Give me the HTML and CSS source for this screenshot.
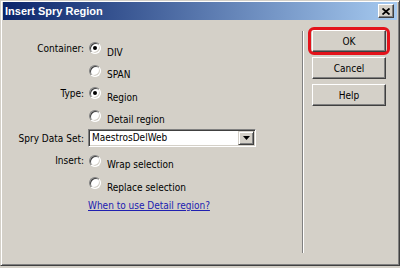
FILE: index.html
```html
<!DOCTYPE html>
<html lang="en">
<head>
  <meta charset="UTF-8" />
  <title>Insert Spry Region</title>
  <link rel="stylesheet" href="styles.css">
</head>
<body>

  <div class="window">

    <!-- Title bar -->
    <div class="titlebar">
      <span>Insert Spry Region</span>
      <button class="close" type="button">
        <svg width="8" height="7" viewBox="0 0 8 7">
          <path d="M0.5 0.5 L7.5 6.5 M7.5 0.5 L0.5 6.5" stroke="#000" stroke-width="1.8" fill="none"/>
        </svg>
      </button>
    </div>

    <div class="main">

      <!-- Form fields -->
      <form class="fields">
        <span class="label">Container:</span>
        <label class="value"><span class="radio on"></span><span class="option">DIV</span></label>

        <span class="label"></span>
        <label class="value"><span class="radio"></span><span class="option">SPAN</span></label>

        <span class="label">Type:</span>
        <label class="value"><span class="radio on"></span><span class="option">Region</span></label>

        <span class="label"></span>
        <label class="value"><span class="radio"></span><span class="option">Detail region</span></label>

        <span class="label">Spry Data Set:</span>
        <div class="value">
          <div class="select">
            <span class="select-text">MaestrosDelWeb</span>
            <span class="drop">
              <svg width="7" height="4" viewBox="0 0 7 4"><path d="M0 0 H7 L3.5 4 Z" fill="#000"/></svg>
            </span>
          </div>
        </div>

        <span class="label">Insert:</span>
        <label class="value"><span class="radio"></span><span class="option">Wrap selection</span></label>

        <span class="label"></span>
        <label class="value"><span class="radio"></span><span class="option">Replace selection</span></label>

        <span class="label"></span>
        <div class="value"><a class="link" href="#">When to use Detail region?</a></div>
      </form>

      <div class="separator"></div>

      <!-- Buttons -->
      <div class="actions">
        <button class="btn default" type="button">OK</button>
        <button class="btn" type="button">Cancel</button>
        <button class="btn" type="button">Help</button>
      </div>

    </div>
  </div>

</body>
</html>
```

FILE: styles.css
```css
* {
  box-sizing: border-box;
}
body {
  margin: 0;
  background: #d4d0c8;
  font-family: "DejaVu Sans Condensed", "DejaVu Sans", sans-serif;
  font-stretch: condensed;
  font-size: 10px;
  color: #000;
}

/* Window frame */
.window {
  width: 400px;
  height: 266px;
  display: flex;
  flex-direction: column;
  padding: 1px 2px 2px 2px;
  border: 1px solid;
  border-color: #d4d0c8 #404040 #404040 #d4d0c8;
  box-shadow: inset 1px 1px #fff, inset -1px -1px #808080;
}

.titlebar {
  height: 18px;
  display: flex;
  align-items: center;
  justify-content: space-between;
  padding: 0 3px 0 2px;
  background: linear-gradient(to right, #0a246a, #a6caf0);
  color: #fff;
  font-family: "Liberation Sans", Arial, sans-serif;
  font-size: 11px;
  font-weight: bold;
}

.close {
  width: 16px;
  height: 14px;
  padding: 0;
  display: flex;
  align-items: center;
  justify-content: center;
  background: #d4d0c8;
  border: 1px solid;
  border-color: #fff #404040 #404040 #fff;
  box-shadow: inset -1px -1px #808080;
}

.main {
  flex: 1;
  display: flex;
}

/* Form */
.fields {
  width: 299px;
  margin: 0;
  padding-top: 17px;
  display: grid;
  grid-template-columns: 81px 1fr;
  grid-auto-rows: 22.5px;
  column-gap: 4px;
  align-content: start;
}

.label {
  text-align: right;
  align-self: center;
  line-height: 13px;
}

.value {
  display: flex;
  align-items: center;
}

.radio {
  width: 12px;
  height: 12px;
  margin-left: 1px;
  flex-shrink: 0;
  display: flex;
  align-items: center;
  justify-content: center;
  border-radius: 50%;
  border: 1px solid;
  border-color: #808080 #fff #fff #808080;
  background: #fff;
  box-shadow: inset 1px 1px #404040, inset -1px -1px #d4d0c8;
}

.radio.on::after {
  content: "";
  width: 4px;
  height: 4px;
  border-radius: 50%;
  background: #000;
}

.option {
  margin: 8px 0 0 6px;
  line-height: 13px;
}

.select {
  width: 168px;
  height: 18px;
  display: flex;
  padding: 1px;
  background: #fff;
  border: 1px solid;
  border-color: #808080 #fff #fff #808080;
  box-shadow: inset 1px 1px #404040, inset -1px -1px #d4d0c8;
}

.select-text {
  flex: 1;
  padding-left: 2px;
  line-height: 14px;
}

.drop {
  width: 16px;
  height: 14px;
  display: flex;
  align-items: center;
  justify-content: center;
  background: #d4d0c8;
  border: 1px solid;
  border-color: #d4d0c8 #404040 #404040 #d4d0c8;
  box-shadow: inset 1px 1px #fff, inset -1px -1px #808080;
}

.link {
  color: #2020b0;
  text-decoration: underline;
  line-height: 13px;
}

/* Etched divider */
.separator {
  width: 2px;
  margin: 11px 0 10px;
  border-left: 1px solid #808080;
  border-right: 1px solid #fff;
}

/* Buttons */
.actions {
  padding: 10px 0 0 8px;
  display: flex;
  flex-direction: column;
  align-items: flex-start;
  gap: 5px;
}

.btn {
  position: relative;
  width: 74px;
  height: 22px;
  padding: 0;
  font: inherit;
  color: #000;
  background: #d4d0c8;
  border: 1px solid;
  border-color: #fff #404040 #404040 #fff;
  box-shadow: inset -1px -1px #808080;
}

/* red highlight ring drawn over the default button */
.btn.default::after {
  content: "";
  position: absolute;
  inset: -4px -5px -4px -5px;
  border: 3px solid #e3131b;
  border-radius: 6px;
}
```
